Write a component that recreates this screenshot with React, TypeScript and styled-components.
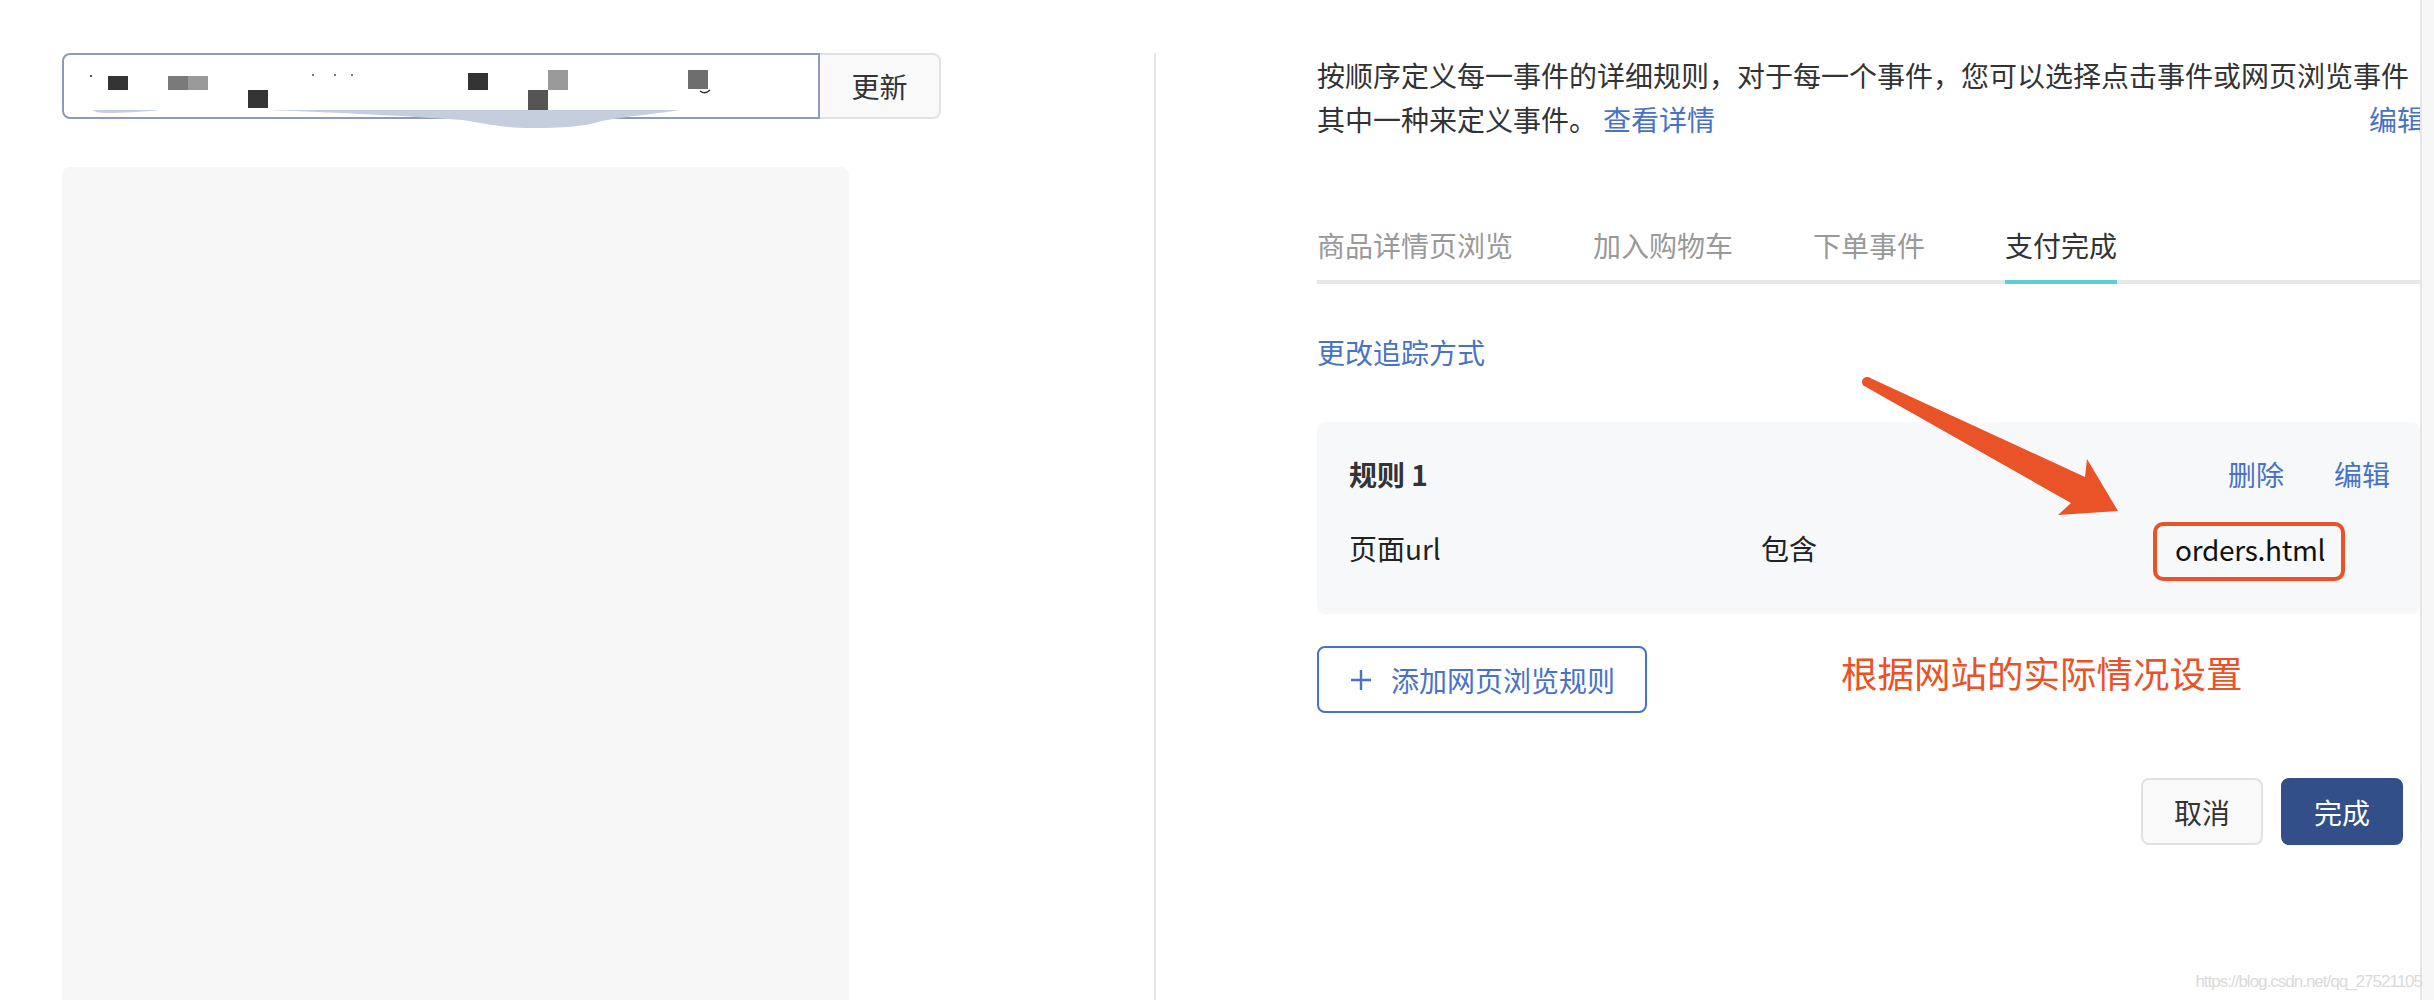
import * as React from "react";
import styled, { createGlobalStyle } from "styled-components";

const GlobalStyle = createGlobalStyle`
  html, body {
    margin: 0;
    padding: 0;
    background: #fff;
  }
  body {
    font-family: "Noto Sans CJK SC", "Noto Sans", sans-serif;
    color: #333;
  }
`;

const BLUE = "#4872c4";
const RED = "#ea5228";

const Page = styled.div`
  position: relative;
  display: flex;
  width: 2434px;
  height: 1000px;
  overflow: hidden;
`;

const LeftPane = styled.div`
  width: 1154px;
  flex: none;
  display: flex;
  flex-direction: column;
  padding: 53px 0 0 62px;
  box-sizing: border-box;
`;

const SearchRow = styled.div`
  display: flex;
  height: 66px;
`;

const SearchInput = styled.div`
  position: relative;
  width: 758px;
  height: 66px;
  box-sizing: border-box;
  border: 2px solid #8c9bba;
  border-radius: 8px 0 0 8px;
  background: #fff;
`;

const Scribble = styled.svg`
  position: absolute;
  left: -2px;
  top: -2px;
  overflow: visible;
`;

const UpdateButton = styled.button`
  width: 121px;
  height: 66px;
  box-sizing: border-box;
  border: 2px solid #e2e2e2;
  border-left: none;
  border-radius: 0 8px 8px 0;
  background: #f9f9f9;
  font-family: inherit;
  font-size: 28px;
  color: #333;
  padding: 0;
`;

const Preview = styled.div`
  margin-top: 48px;
  width: 787px;
  flex: 1;
  background: #f7f7f7;
  border-radius: 8px 8px 0 0;
`;

const Divider = styled.div`
  width: 2px;
  flex: none;
  margin-top: 53px;
  background: #e4e4e4;
`;

const RightPane = styled.div`
  width: 1264px;
  flex: none;
  padding-left: 161px;
  box-sizing: border-box;
  overflow: hidden;
  display: flex;
  flex-direction: column;
`;

const Scrollbar = styled.div`
  width: 14px;
  flex: none;
  box-sizing: border-box;
  border-left: 2px solid #e6e6e6;
  background: #f7f7f7;
`;

const Intro = styled.div`
  padding-top: 53px;
  font-size: 28px;
  line-height: 44px;
  color: #333;
`;

const IntroLine = styled.div`
  display: flex;
  justify-content: space-between;
  width: 1108px;
  white-space: nowrap;
`;

const Link = styled.a`
  color: ${BLUE};
  text-decoration: none;
  cursor: pointer;
`;

const DetailLink = styled(Link)`
  margin-left: 6px;
`;

const TabBar = styled.div`
  display: flex;
  gap: 80px;
  margin-top: 82px;
  width: 1103px;
  border-bottom: 4px solid #e6e8eb;
`;

const Tab = styled.div<{ $active?: boolean }>`
  font-size: 28px;
  line-height: 44px;
  padding-bottom: 13px;
  margin-bottom: -4px;
  color: ${(p) => (p.$active ? "#333" : "#999")};
  border-bottom: 4px solid ${(p) => (p.$active ? "#5ccfd6" : "transparent")};
`;

const ChangeLink = styled(Link)`
  display: block;
  margin-top: 46px;
  font-size: 28px;
  line-height: 44px;
  align-self: flex-start;
`;

const RuleCard = styled.div`
  margin-top: 48px;
  width: 1103px;
  box-sizing: border-box;
  padding: 30px 30px 33px 32px;
  background: #f7f8fa;
  border-radius: 8px;
`;

const RuleHead = styled.div`
  display: flex;
  justify-content: space-between;
  align-items: center;
  font-size: 28px;
  line-height: 44px;
`;

const RuleTitle = styled.div`
  font-weight: 600;
  color: #333;
`;

const RuleActions = styled.div`
  display: flex;
  gap: 50px;
`;

const RuleRow = styled.div`
  display: grid;
  grid-template-columns: 412px 392px auto;
  align-items: center;
  margin-top: 26px;
  font-size: 28px;
  color: #222;
`;

const RuleCell = styled.span`
  padding-bottom: 8px;
`;

const Highlight = styled.span`
  display: inline-flex;
  align-items: center;
  justify-self: start;
  height: 59px;
  box-sizing: border-box;
  padding: 0 16px 6px 18px;
  border: 4px solid ${RED};
  border-radius: 10px;
  color: #111;
  letter-spacing: -0.3px;
`;

const AddRow = styled.div`
  display: flex;
  margin-top: 32px;
`;

const AddButton = styled.button`
  display: flex;
  align-items: center;
  gap: 19px;
  width: 330px;
  height: 67px;
  box-sizing: border-box;
  padding: 0 0 0 31px;
  border: 2px solid ${BLUE};
  border-radius: 8px;
  background: #fff;
  color: ${BLUE};
  font-family: inherit;
  font-size: 28px;
`;

const Note = styled.div`
  margin: 5px 0 0 194px;
  font-size: 36.5px;
  line-height: 44px;
  color: ${RED};
`;

const Footer = styled.div`
  display: flex;
  justify-content: flex-end;
  gap: 18px;
  margin-top: 65px;
  width: 1103px;
  padding-right: 17px;
  box-sizing: border-box;
`;

const FooterButton = styled.button<{ $primary?: boolean }>`
  width: 122px;
  height: 67px;
  box-sizing: border-box;
  border-radius: 8px;
  border: 2px solid ${(p) => (p.$primary ? "#324f8a" : "#e1e1e1")};
  background: ${(p) => (p.$primary ? "#324f8a" : "#f9f9f9")};
  color: ${(p) => (p.$primary ? "#fff" : "#333")};
  font-family: inherit;
  font-size: 28px;
  padding: 0;
`;

const Overlay = styled.svg`
  position: absolute;
  left: 0;
  top: 0;
  pointer-events: none;
`;

const Watermark = styled.div`
  position: absolute;
  right: 12px;
  bottom: 8px;
  font-family: "Liberation Sans", Arial, sans-serif;
  font-size: 17px;
  letter-spacing: -1px;
  color: #dadada;
`;

const PlusIcon = () => (
  <svg width="22" height="22" viewBox="0 0 22 22">
    <path d="M11 1v20M1 11h20" stroke={BLUE} strokeWidth="2.4" fill="none" />
  </svg>
);

const tabs = ["商品详情页浏览", "加入购物车", "下单事件", "支付完成"];

export default function App() {
  return (
    <>
      <GlobalStyle />
      <Page>
        <LeftPane>
          <SearchRow>
            <SearchInput>
              <Scribble width="760" height="90" viewBox="0 0 760 90">
                <path
                  d="M206,57 L618,57 C600,60 560,64 540,68 C520,74 500,75 470,75 C440,75 420,70 400,67 C330,62 260,59 206,57 Z"
                  fill="#c5cedc"
                />
                <path d="M30,57 L98,57 C80,59 60,60 45,60 C38,60 33,59 30,57 Z" fill="#c5cedc" />
                <rect x="28" y="22" width="2" height="2" fill="#555" />
                <rect x="46" y="23" width="20" height="14" fill="#333" />
                <rect x="106" y="23" width="20" height="14" fill="#7a7a7a" />
                <rect x="126" y="23" width="20" height="14" fill="#9a9a9a" />
                <rect x="186" y="37" width="20" height="18" fill="#333" />
                <rect x="250" y="21" width="2" height="2" fill="#777" />
                <rect x="272" y="21" width="2" height="2" fill="#777" />
                <rect x="289" y="21" width="2" height="2" fill="#777" />
                <rect x="406" y="20" width="20" height="17" fill="#333" />
                <rect x="466" y="37" width="20" height="20" fill="#555" />
                <rect x="486" y="17" width="20" height="20" fill="#9a9a9a" />
                <rect x="626" y="17" width="20" height="19" fill="#6e6e6e" />
                <path d="M638,38 Q643,42 648,37" stroke="#333" strokeWidth="1.5" fill="none" />
              </Scribble>
            </SearchInput>
            <UpdateButton>更新</UpdateButton>
          </SearchRow>
          <Preview />
        </LeftPane>

        <Divider />

        <RightPane>
          <Intro>
            <div>按顺序定义每一事件的详细规则，对于每一个事件，您可以选择点击事件或网页浏览事件</div>
            <IntroLine>
              <span>
                其中一种来定义事件。<DetailLink>查看详情</DetailLink>
              </span>
              <Link>编辑</Link>
            </IntroLine>
          </Intro>

          <TabBar>
            {tabs.map((t, i) => (
              <Tab key={t} $active={i === tabs.length - 1}>
                {t}
              </Tab>
            ))}
          </TabBar>

          <ChangeLink>更改追踪方式</ChangeLink>

          <RuleCard>
            <RuleHead>
              <RuleTitle>规则 1</RuleTitle>
              <RuleActions>
                <Link>删除</Link>
                <Link>编辑</Link>
              </RuleActions>
            </RuleHead>
            <RuleRow>
              <RuleCell>页面url</RuleCell>
              <RuleCell>包含</RuleCell>
              <Highlight>orders.html</Highlight>
            </RuleRow>
          </RuleCard>

          <AddRow>
            <AddButton>
              <PlusIcon />
              添加网页浏览规则
            </AddButton>
            <Note>根据网站的实际情况设置</Note>
          </AddRow>

          <Footer>
            <FooterButton>取消</FooterButton>
            <FooterButton $primary>完成</FooterButton>
          </Footer>
        </RightPane>

        <Scrollbar />

        <Overlay width="2434" height="1000" viewBox="0 0 2434 1000">
          <circle cx="1867" cy="382" r="5" fill={RED} />
          <polygon
            points="1868,377 2085,477 2087,459 2118,511 2058,515 2071,503 1866,387"
            fill={RED}
          />
        </Overlay>
        <Watermark>https://blog.csdn.net/qq_27521105</Watermark>
      </Page>
    </>
  );
}
